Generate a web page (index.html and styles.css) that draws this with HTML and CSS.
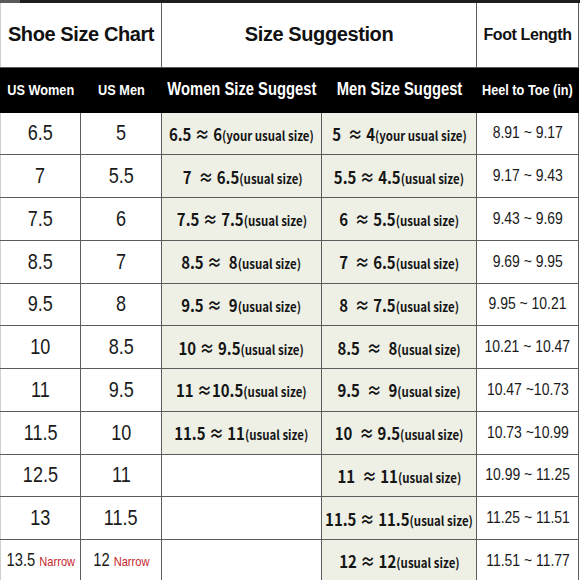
FILE: index.html
```html
<!DOCTYPE html>
<html>
<head>
<meta charset="utf-8">
<link rel="stylesheet" href="styles.css">
</head>
<body>
<div class="topbar"></div>
<table class="chart">
  <colgroup>
    <col class="c1"><col class="c2"><col class="c3"><col class="c4"><col class="c5">
  </colgroup>
  <tr class="title-row">
    <th colspan="2" class="title">Shoe Size Chart</th>
    <th colspan="2" class="title">Size Suggestion</th>
    <th class="title small">Foot Length</th>
  </tr>
  <tr class="head-row">
    <th class="hd"><span class="n">US Women</span></th>
    <th class="hd"><span class="n">US Men</span></th>
    <th class="hd big"><span class="n">Women Size Suggest</span></th>
    <th class="hd big"><span class="n">Men Size Suggest</span></th>
    <th class="hd"><span class="n">Heel to Toe (in)</span></th>
  </tr>
  <tr><td><span class="n">6.5</span></td><td><span class="n">5</span></td><td class="sg"><span class="s">6.5 ≈ 6<small>(your usual size)</small></span></td><td class="sg"><span class="s">5&nbsp; ≈ 4<small>(your usual size)</small></span></td><td class="fl"><span class="n">8.91 ~ 9.17</span></td></tr>
  <tr><td><span class="n">7</span></td><td><span class="n">5.5</span></td><td class="sg"><span class="s">&nbsp;7&nbsp; ≈ 6.5<small>(usual size)</small></span></td><td class="sg"><span class="s">5.5 ≈ 4.5<small>(usual size)</small></span></td><td class="fl"><span class="n">9.17 ~ 9.43</span></td></tr>
  <tr><td><span class="n">7.5</span></td><td><span class="n">6</span></td><td class="sg"><span class="s">7.5 ≈ 7.5<small>(usual size)</small></span></td><td class="sg"><span class="s">6&nbsp; ≈ 5.5<small>(usual size)</small></span></td><td class="fl"><span class="n">9.43 ~ 9.69</span></td></tr>
  <tr><td><span class="n">8.5</span></td><td><span class="n">7</span></td><td class="sg"><span class="s">8.5 ≈&nbsp; 8<small>(usual size)</small></span></td><td class="sg"><span class="s">7&nbsp; ≈ 6.5<small>(usual size)</small></span></td><td class="fl"><span class="n">9.69 ~ 9.95</span></td></tr>
  <tr><td><span class="n">9.5</span></td><td><span class="n">8</span></td><td class="sg"><span class="s">9.5 ≈&nbsp; 9<small>(usual size)</small></span></td><td class="sg"><span class="s">8&nbsp; ≈ 7.5<small>(usual size)</small></span></td><td class="fl"><span class="n">9.95 ~ 10.21</span></td></tr>
  <tr><td><span class="n">10</span></td><td><span class="n">8.5</span></td><td class="sg"><span class="s">10 ≈ 9.5<small>(usual size)</small></span></td><td class="sg"><span class="s">8.5&nbsp; ≈&nbsp; 8<small>(usual size)</small></span></td><td class="fl"><span class="n">10.21 ~ 10.47</span></td></tr>
  <tr><td><span class="n">11</span></td><td><span class="n">9.5</span></td><td class="sg"><span class="s">11 ≈10.5<small>(usual size)</small></span></td><td class="sg"><span class="s">9.5&nbsp; ≈&nbsp; 9<small>(usual size)</small></span></td><td class="fl"><span class="n">10.47 ~10.73</span></td></tr>
  <tr><td><span class="n">11.5</span></td><td><span class="n">10</span></td><td class="sg"><span class="s">11.5 ≈ 11<small>(usual size)</small></span></td><td class="sg"><span class="s">10&nbsp; ≈ 9.5<small>(usual size)</small></span></td><td class="fl"><span class="n">10.73 ~10.99</span></td></tr>
  <tr><td><span class="n">12.5</span></td><td><span class="n">11</span></td><td></td><td class="sg"><span class="s">11&nbsp; ≈ 11<small>(usual size)</small></span></td><td class="fl"><span class="n">10.99 ~ 11.25</span></td></tr>
  <tr><td><span class="n">13</span></td><td><span class="n">11.5</span></td><td></td><td class="sg"><span class="s">11.5 ≈ 11.5<small>(usual size)</small></span></td><td class="fl"><span class="n">11.25 ~ 11.51</span></td></tr>
  <tr><td class="last"><span class="n">13.5 <span class="narrow">Narrow</span></span></td><td class="last"><span class="n">12 <span class="narrow">Narrow</span></span></td><td></td><td class="sg"><span class="s">12 ≈ 12<small>(usual size)</small></span></td><td class="fl"><span class="n">11.51 ~ 11.77</span></td></tr>
</table>
</body>
</html>
```

FILE: styles.css
```css
html, body {
  margin: 0;
  padding: 0;
  background: #ffffff;
}

.topbar {
  height: 3px;
  background: linear-gradient(to right, #5a5a5a 0, #5a5a5a 20px, #1e1e1e 20px);
}

.chart {
  border-collapse: collapse;
  table-layout: fixed;
  width: 579px;
  font-family: "Liberation Sans", Arial, sans-serif;
  color: #111;
}

.c1 { width: 80px; }
.c2 { width: 81px; }
.c3 { width: 160px; }
.c4 { width: 155px; }
.c5 { width: 102px; }

.chart td, .chart th {
  border: 1px solid #5c5c5c;
  padding: 0;
  text-align: center;
  vertical-align: middle;
  white-space: nowrap;
  overflow: hidden;
}

.chart tr { height: 42.75px; }

/* condensed text: Arial Narrow look */
.n {
  display: inline-block;
  transform: scaleX(0.82);
  margin: 0 -40px;
}

.s {
  display: inline-block;
  transform: scaleX(0.88);
  margin: 0 -40px;
}

.title-row { height: 64px !important; }
.title-row th {
  border-top: none;
  font-weight: bold;
  font-size: 20px;
  letter-spacing: -0.4px;
  color: #111;
}
.title-row th:first-child { border-left: 1px solid #cfcfcf; }
.title-row .small { font-size: 16px; letter-spacing: -0.4px; }

.head-row { height: 45px !important; }
.head-row th {
  background: #000;
  border-color: #000;
  color: #fff;
  font-weight: bold;
  font-size: 15.5px;
}
.head-row th.big { font-size: 18px; }

.chart td {
  font-size: 22px;
  color: #1a1a1a;
}
.chart tr td:first-child { border-left: 1px solid #cfcfcf; }

.chart td.fl { font-size: 17px; }

.chart td.sg {
  background: #eef0e6;
  font-family: "Noto Sans CJK SC", "Noto Sans", sans-serif;
  font-weight: bold;
  font-size: 17px;
  color: #151515;
}
.sg small {
  font-size: 13px;
  font-weight: bold;
}

.chart td.last { font-size: 18px; }
.narrow {
  color: #c4262e;
  font-size: 13.5px;
}
```
